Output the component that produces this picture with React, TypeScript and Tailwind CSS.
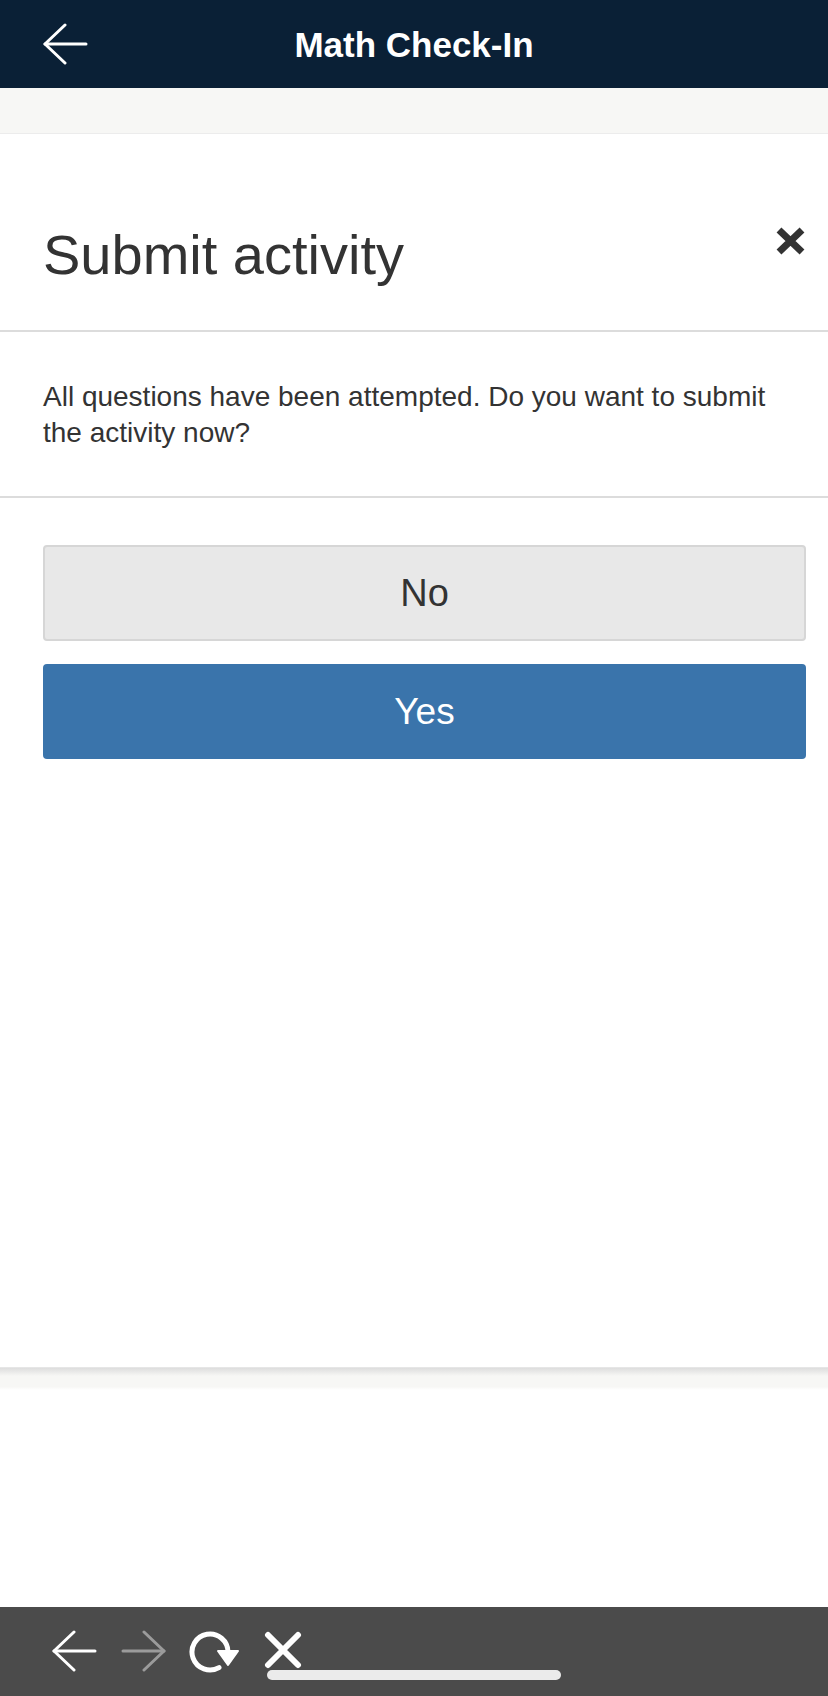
import React from "react"

function BackArrow({ color = "#ffffff", flip = false }: { color?: string; flip?: boolean }) {
  return (
    <svg width="46" height="42" viewBox="0 0 46 42" fill="none" className={flip ? "-scale-x-100" : ""}>
      <path d="M3 21 H44" stroke={color} strokeWidth="3" strokeLinecap="round" />
      <path d="M23 2 L3 21 L23 40" stroke={color} strokeWidth="3" strokeLinecap="round" strokeLinejoin="round" />
    </svg>
  )
}

function CloseIcon() {
  return (
    <svg width="31" height="30" viewBox="0 0 31 30" fill="none">
      <path d="M4 4 L27 26 M27 4 L4 26" stroke="#333333" strokeWidth="7" />
    </svg>
  )
}

function RefreshIcon() {
  return (
    <svg width="54" height="42" viewBox="0 0 54 42" fill="none">
      <path d="M30 36.6 A18 18 0 1 1 39 21" stroke="#ffffff" strokeWidth="5" strokeLinecap="round" />
      <path d="M29 20 L49 20 L39 34 Z" fill="#ffffff" stroke="#ffffff" strokeWidth="2" strokeLinejoin="round" />
    </svg>
  )
}

function BarClose() {
  return (
    <svg width="40" height="38" viewBox="0 0 40 38" fill="none">
      <path d="M5 4 L35 34 M35 4 L5 34" stroke="#ffffff" strokeWidth="6" strokeLinecap="round" />
    </svg>
  )
}

export default function App() {
  return (
    <div className="w-full h-[1696px] flex flex-col bg-white font-['Liberation_Sans',Arial,sans-serif] overflow-hidden">
      {/* Top bar */}
      <header className="h-[88px] bg-[#0a2036] grid grid-cols-[1fr_auto_1fr] items-center shrink-0">
        <div className="pl-[42px] flex items-center">
          <BackArrow />
        </div>
        <h1 className="text-white text-[35px] font-bold leading-none">Math Check-In</h1>
        <div />
      </header>

      <div className="h-[45px] bg-[#f7f7f5] shrink-0" />

      {/* Dialog card */}
      <div className="h-[1234px] bg-white border-t border-[#ececec] flex flex-col shrink-0">
        <div className="pl-[43px] pr-[22px] pt-[89px] pb-[43px] border-b-2 border-[#dcdcdc] flex items-start justify-between">
          <h2 className="text-[56px] leading-[64px] text-[#333333]">Submit activity</h2>
          <button className="mt-[3px]">
            <CloseIcon />
          </button>
        </div>

        <div className="pl-[43px] pr-[50px] pt-[47px] pb-[45px] border-b-2 border-[#dcdcdc]">
          <p className="text-[28px] leading-[36px] text-[#333333]">
            All questions have been attempted. Do you want to submit the activity now?
          </p>
        </div>

        <div className="pl-[43px] pr-[22px] pt-[47px] flex flex-col gap-[23px]">
          <button className="h-[96px] w-full rounded-[4px] bg-[#e8e8e8] border-2 border-[#d6d6d6] text-[38px] text-[#333333]">
            No
          </button>
          <button className="h-[95px] w-full rounded-[4px] bg-[#3a74ab] text-[37px] text-white">
            Yes
          </button>
        </div>
      </div>

      <div className="h-[23px] shrink-0 border-t border-[#e6e6e6] bg-[linear-gradient(to_bottom,#dddddd,#f7f7f5_8px,#f7f7f5_85%,#ffffff)]" />

      <div className="h-[217px] bg-white shrink-0" />

      {/* Browser toolbar */}
      <div className="h-[89px] bg-[#4b4b4b] relative flex items-center shrink-0 pl-[51px] pb-[2px]">
        <div className="flex items-center">
          <BackArrow />
          <div className="ml-[24px]">
            <BackArrow color="#9b9b9b" flip />
          </div>
          <div className="ml-[22px] mt-[2px]">
            <RefreshIcon />
          </div>
          <div className="ml-[20px] -mt-[2px]">
            <BarClose />
          </div>
        </div>
        <div className="absolute left-[267px] top-[63px] w-[294px] h-[10px] rounded-full bg-[#ebebeb]" />
      </div>
    </div>
  )
}
